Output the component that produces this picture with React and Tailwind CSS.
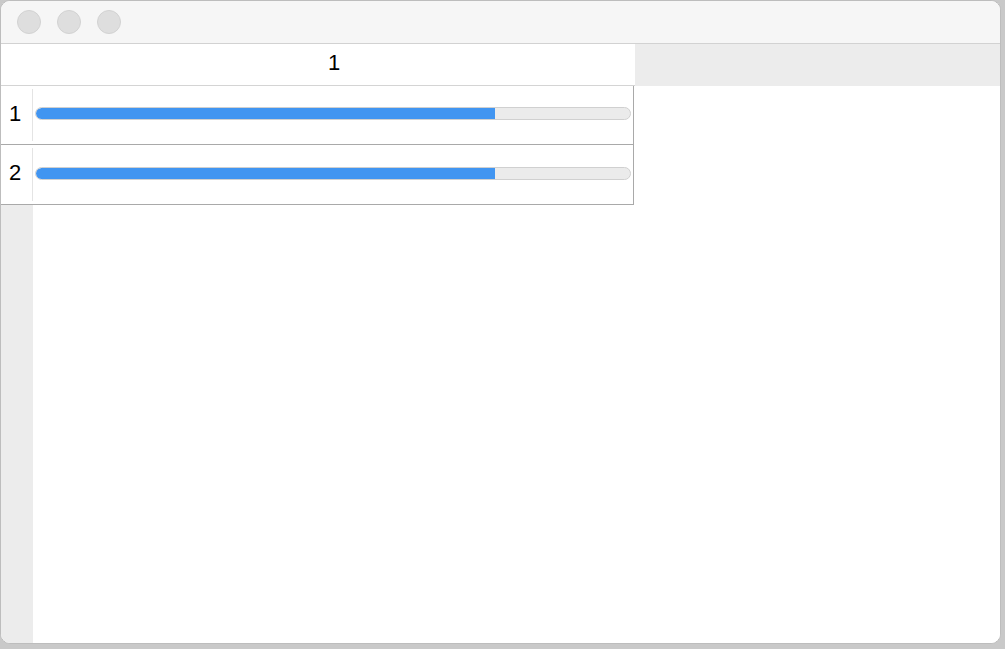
import React from 'react';

const rows = [
  { id: 1, value: 77.3, h: 'h-[59px]', pt: 'pt-[21px]' },
  { id: 2, value: 77.3, h: 'h-[60px]', pt: 'pt-[22px]' },
];

const ProgressBar = ({ value }) => (
  <div className="relative w-[596px] h-[13px] rounded-full bg-[#ebebeb] border border-[#d0d0d0] overflow-hidden">
    <div className="absolute left-0 top-0 bottom-0 bg-[#4195f1] rounded-l-full" style={{ width: `${value}%` }} />
  </div>
);

const App = () => {
  return (
    <div className="w-[1005px] h-[649px] bg-[#c9c9c9] overflow-hidden" style={{ fontFamily: '"Liberation Sans", Arial, sans-serif' }}>
      <div className="w-[1001px] h-[644px] bg-white rounded-[10px] overflow-hidden flex flex-col border border-[#bdbdbd]">
        {/* title bar */}
        <div className="h-[43px] shrink-0 bg-[#f6f6f6] border-b border-[#d2d2d2] flex items-center pl-[16px] gap-[16px]">
          <div className="w-6 h-6 rounded-full bg-[#dedede] border border-[#d2d2d2]" />
          <div className="w-6 h-6 rounded-full bg-[#dedede] border border-[#d2d2d2]" />
          <div className="w-6 h-6 rounded-full bg-[#dedede] border border-[#d2d2d2]" />
        </div>

        {/* column header */}
        <div className="h-[42px] shrink-0 flex">
          <div className="w-[634px] bg-white border-b border-[#d4d4d4] flex">
            <div className="w-[32px]" />
            <div className="flex-1 flex items-center justify-center pb-[4px] text-[22px] text-black">1</div>
          </div>
          <div className="flex-1 bg-[#ececec]" />
        </div>

        {/* rows */}
        <div className="flex-1 flex flex-col">
          {rows.map(r => (
            <div key={r.id} className={`w-[633px] ${r.h} flex border-b border-[#a9a9a9]`}>
              <div className="w-[32px] flex py-[3px]">
                <div className="flex-1 flex items-center pl-[8px] pb-[4px] text-[22px] text-black border-r border-[#e4e4e4]">{r.id}</div>
              </div>
              <div className={`flex-1 border-r border-[#a9a9a9] pl-[2px] ${r.pt}`}>
                <ProgressBar value={r.value} />
              </div>
            </div>
          ))}
          <div className="flex-1 flex">
            <div className="w-[32px] bg-[#ececec]" />
            <div className="flex-1 bg-white" />
          </div>
        </div>
      </div>
    </div>
  );
};

export default App;
